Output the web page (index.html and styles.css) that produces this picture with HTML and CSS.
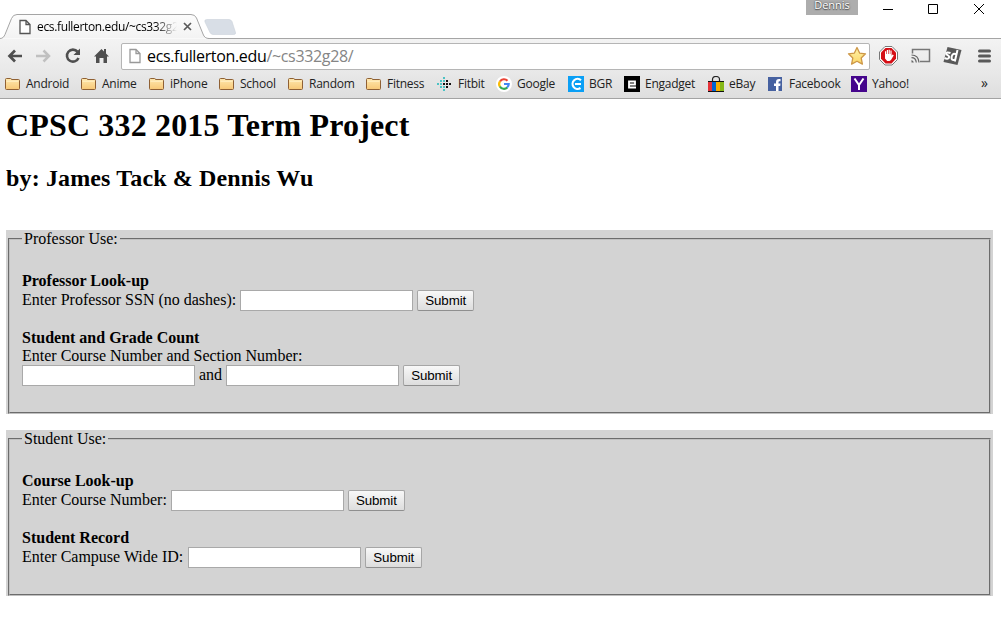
FILE: index.html
```html
<!DOCTYPE html>
<html lang="en">
<head>
<meta charset="utf-8">
<title>ecs.fullerton.edu/~cs332g28/</title>
<link rel="stylesheet" href="styles.css">
</head>
<body>
<svg width="0" height="0" class="defs" aria-hidden="true">
  <defs>
    <linearGradient id="fold" x1="0" y1="0" x2="0" y2="1"><stop offset="0" stop-color="#ffe8ae"/><stop offset="1" stop-color="#f7c877"/></linearGradient>
    <linearGradient id="strip" x1="0" y1="0" x2="0" y2="1"><stop offset="0" stop-color="#fcfcfc"/><stop offset="1" stop-color="#f3f3f3"/></linearGradient>
    <linearGradient id="gold" x1="0" y1="0" x2="0" y2="1"><stop offset="0" stop-color="#fff3a8"/><stop offset="1" stop-color="#fbd668"/></linearGradient>
    <symbol id="folder" viewBox="0 0 16 16"><path d="M.5 12.500V3.500q0-1 1-1h4q1 0 1 1h7q1 0 1 1v8q0 1-1 1h-12q-1 0-1-1z" fill="url(#fold)" stroke="#8f6034"/><path d="M1.500 5.200h12" stroke="#fff2ca" fill="none"/></symbol>
    <symbol id="page" viewBox="0 0 12 16"><path d="M1 1.500h6l4 4v9H1zM7 1.500v4h4" fill="#fff" stroke="currentColor" stroke-width="1.3"/></symbol>
  </defs>
</svg>

<header class="browser">
  <div class="titlebar">
    <div class="tab">
      <svg class="tab-shape" width="240" height="25" viewBox="0 0 240 25"><path d="M0 24.500c3 0 4-2 5-4L11.500 4.500Q13 .5 17 .5H191Q195 .5 196.500 4L203 20q1.500 4.500 6 4.500" fill="url(#strip)" stroke="#a5a5a5"/><path d="M207 5.500h22q2 0 3 2l3.500 11q.5 2-2 2H213q-2 0-3-2L205 8q-1-2.500 2-2.500z" fill="#d8dee6" stroke="#cbd1da" stroke-width=".6"/></svg>
      <svg class="tab-page" width="12" height="16"><use href="#page"/></svg>
      <span class="tab-title">ecs.fullerton.edu/~cs332g2</span>
      <svg class="tab-close" width="9" height="9" viewBox="0 0 9 9"><path d="M1 1l7 7M8 1L1 8" stroke="#5a5a5a" stroke-width="1.7"/></svg>
    </div>
    <span class="user">Dennis</span>
    <svg class="controls" width="102" height="12" viewBox="0 0 102 12" fill="none" stroke="#000"><path d="M0 6.500h10M45.500 1.500h9v9h-9zM91 1l10 10M101 1L91 11"/></svg>
  </div>

  <div class="toolbar">
    <svg class="nav" width="104" height="18" viewBox="0 0 104 18" fill="none">
      <path d="M15 9H2M8 3.500L2.500 9l5.500 5.500" stroke="#4f4f4f" stroke-width="2.700"/>
      <path d="M29 9h13M36.500 3.500L42 9l-5.500 5.500" stroke="#c0c0c0" stroke-width="2.500"/>
      <path d="M70.500 4.700A6 6 0 1 0 71.500 11" stroke="#4f4f4f" stroke-width="2.600"/><path d="M73 1.500V8h-6.500z" fill="#4f4f4f"/>
      <path d="M87 9.500L94.500 2l2.500 2.500V2h2v4.500l3 3H100V16h-3.500v-5h-4v5H89V9.500z" fill="#4f4f4f"/>
    </svg>
    <div class="omnibox">
      <svg class="url-page" width="12" height="16"><use href="#page"/></svg>
      <span class="url">ecs.fullerton.edu<span class="path">/~cs332g28/</span></span>
      <svg class="star" width="20" height="20" viewBox="0 0 20 20"><path d="M10 1.500l2.600 5.600 5.900.7-4.300 4.200 1.200 6.100L10 15.200l-5.400 2.900L5.800 12 1.500 7.800l5.900-.7z" fill="url(#gold)" stroke="#cd9747" stroke-width="1.300" stroke-linejoin="round"/></svg>
    </div>
    <svg class="extensions" width="114" height="22" viewBox="0 0 114 22">
      <path d="M6 1.500h7l5.500 5.500v7.500L13 20H6L.5 14.500V7z" fill="#fff" stroke="#777"/>
      <path d="M6.500 3h6L17 7.500v6.300L12.500 18.500h-6L2 13.800V7.500z" fill="#d50f16"/>
      <path d="M6 10V6.200h1.200V9h.6V5H9v4h.6V4.700h1.200V9h.6V5.500h1.200v5.200l1-1.200 1.200.8-2.800 4.700-1.500 1H8.200L6 13.500z" fill="#fff"/>
      <path d="M33.500 8.500V4.500h17v12H41" fill="none" stroke="#777" stroke-width="1.500"/>
      <path d="M32.500 10q7 0 7.500 7.500M32.500 12.700q4.300 0 4.800 4.800" fill="none" stroke="#666" stroke-width="1.200"/><path d="M32.500 15q2 .5 2.300 2.500h-2.300z" fill="#666"/>
      <path d="M68.500 2l14 3L78.500 20l-14-3z" fill="#595959"/>
      <path d="M71.500 8q-4-1.500-4.300.7c0 1.500 3.300 1.500 3 3.400-.3 2-3 1.800-4.700.9M78.500 5l-2.700 11.500M77.300 9.500q-3.500-2-4.600 2-.8 4.500 3.300 3.300" fill="none" stroke="#fff" stroke-width="2"/>
      <path d="M100.500 6h10M100.500 11h10M100.500 16h10" stroke="#595959" stroke-width="3" stroke-linecap="round"/>
    </svg>
  </div>

  <nav class="bookmarks">
    <span class="mark"><svg width="16" height="16"><use href="#folder"/></svg>Android</span>
    <span class="mark"><svg width="16" height="16"><use href="#folder"/></svg>Anime</span>
    <span class="mark"><svg width="16" height="16"><use href="#folder"/></svg>iPhone</span>
    <span class="mark"><svg width="16" height="16"><use href="#folder"/></svg>School</span>
    <span class="mark"><svg width="16" height="16"><use href="#folder"/></svg>Random</span>
    <span class="mark"><svg width="16" height="16"><use href="#folder"/></svg>Fitness</span>
    <span class="mark"><svg width="16" height="16" viewBox="0 0 16 16"><path d="M0 7h2v2H0zM3 7h2v2H3zM3 4h2v2H3zM3 10h2v2H3zM6 1h2v2H6zM6 4h2v2H6zM6 10h2v2H6zM6 13h2v2H6z" fill="#4cc2c4"/><path d="M6 7h2v2H6zM9 4h2v2H9zM9 7h2v2H9zM9 10h2v2H9zM12 7h2v2h-2z" fill="#111"/></svg>Fitbit</span>
    <span class="mark"><svg width="16" height="16" viewBox="0 0 16 16"><circle cx="8" cy="8" r="8" fill="#fff"/><g fill="none" stroke-width="2.200"><path d="M4 5.500A4.700 4.700 0 0 1 11.500 4.800" stroke="#ea4335"/><path d="M4 5.300A4.700 4.700 0 0 0 4 10.700" stroke="#fbbc05"/><path d="M3.900 10.500A4.700 4.700 0 0 0 11.300 11.400" stroke="#34a853"/><path d="M8 8h4.700a4.700 4.700 0 0 1-1.600 3.500" stroke="#4285f4"/></g></svg>Google</span>
    <span class="mark"><svg width="16" height="16" viewBox="0 0 16 16"><path fill="#0a9ff5" d="M0 0h16v16H0z"/><path d="M13 4.300A5 5 0 1 0 12.500 12M7 8h6" fill="none" stroke="#fff" stroke-width="2.200"/></svg>BGR</span>
    <span class="mark"><svg width="16" height="16" viewBox="0 0 16 16"><path d="M0 0h16v16H0z"/><path d="M12 11.500H5v-6h6v3H5" fill="none" stroke="#fff" stroke-width="1.800"/></svg>Engadget</span>
    <span class="mark"><svg width="16" height="16" viewBox="0 0 16 16"><path d="M4.500 5V3.500q0-3 3.500-3t3.500 3V5" fill="none" stroke="#222" stroke-width="1.200"/><path d="M0 5h16v11H0z" fill="#111"/><path d="M0 6h4v9H0z" fill="#e53238"/><path d="M4 6h4v9H4z" fill="#0064d2"/><path d="M8 6h4v9H8z" fill="#f5af02"/><path d="M12 6h4v9h-4z" fill="#86b817"/></svg>eBay</span>
    <span class="mark"><svg width="16" height="16" viewBox="0 0 16 16"><path d="M0 1h14v14H0z" fill="#4661a0"/><path d="M8 15v-5H6V7.500h2V6q0-3 3-3h1.500v2.300H11.500q-1 0-1 1v1.200h2L12.200 10h-1.700v5z" fill="#fff"/></svg>Facebook</span>
    <span class="mark"><svg width="16" height="16" viewBox="0 0 16 16"><path d="M0 0h16v16H0z" fill="#45058c"/><path d="M3.500 2.500L8 9l4.500-6.500M8 8.500V14" fill="none" stroke="#fff" stroke-width="2"/></svg>Yahoo!</span>
    <span class="more">»</span>
  </nav>
</header>

<main class="page">
  <h1>CPSC 332 2015 Term Project</h1>
  <h2>by: James Tack &amp; Dennis Wu</h2>

  <section class="panel">
    <fieldset>
      <legend>Professor Use:</legend>
      <form class="query">
        <b>Professor Look-up</b>
        <div class="row"><label>Enter Professor SSN (no dashes):</label><input type="text"><button type="button">Submit</button></div>
      </form>
      <form class="query">
        <b>Student and Grade Count</b>
        <span>Enter Course Number and Section Number:</span>
        <div class="row"><input type="text"><label>and</label><input type="text"><button type="button">Submit</button></div>
      </form>
    </fieldset>
  </section>

  <section class="panel">
    <fieldset>
      <legend>Student Use:</legend>
      <form class="query">
        <b>Course Look-up</b>
        <div class="row"><label>Enter Course Number:</label><input type="text"><button type="button">Submit</button></div>
      </form>
      <form class="query">
        <b>Student Record</b>
        <div class="row"><label class="campus-id">Enter Campuse Wide ID:</label><input type="text"><button type="button">Submit</button></div>
      </form>
    </fieldset>
  </section>
</main>
</body>
</html>
```
FILE: styles.css
```css
* { box-sizing: border-box; }
body { margin: 0; background: #fff; color: #000; font: 16px/18px "Liberation Serif", "Times New Roman", serif; overflow: hidden; }
svg { display: block; flex: none; }
.defs { position: absolute; }

.browser { height: 99px; border-bottom: 1px solid #a3a3a3; font-family: "Open Sans", "Noto Sans", sans-serif; }
.titlebar { height: 39px; display: flex; align-items: flex-start; background: linear-gradient(#a5a5a5, #a5a5a5) 208px 38px / 100% 1px no-repeat; }
.tab { position: relative; width: 240px; height: 25px; margin-top: 14px; padding-left: 19px; display: flex; align-items: center; }
.tab-shape { position: absolute; left: 0; top: 0; }
.tab-page, .tab-title, .tab-close { position: relative; }
.tab-page { color: #555; }
.tab-title { width: 140px; margin-left: 6px; white-space: nowrap; font-size: 12px; letter-spacing: -.35px; -webkit-mask-image: linear-gradient(90deg, #000 118px, transparent 140px); mask-image: linear-gradient(90deg, #000 118px, transparent 140px); }
.tab-close { margin-left: 6px; }
.user { width: 52px; height: 15px; margin-left: 566px; background: #adadad; color: #fff; font-size: 11px; line-height: 10px; text-align: center; text-shadow: 0 0 2px #444, 0 1px 1px #555; }
.controls { margin: 3px 0 0 25px; }

.toolbar { height: 34px; display: flex; align-items: center; padding-left: 7px; background: linear-gradient(#f3f3f3, #e8e8e8); }
.nav { margin-right: -1px; overflow: visible; }
.omnibox { width: 749px; height: 27px; margin-left: 11px; padding: 0 2px 0 7px; display: flex; align-items: center; border: 1px solid #b5b5b5; border-radius: 2px; background: #fff; }
.url-page { color: #999; }
.url { flex: 1; margin-left: 6px; font-size: 16px; letter-spacing: -.34px; }
.path { color: #858585; }
.extensions { margin-left: 9px; }

.bookmarks { height: 25px; padding-left: 5px; display: grid; grid-template-columns: 76px 68px 70px 69px 78px 71px 59px 72px 56px 84px 60px 83px 130px 1fr; align-items: center; padding-bottom: 3px; background: linear-gradient(#e8e8e8, #dedede); font-size: 12px; letter-spacing: -.25px; color: #222; }
.mark { display: flex; align-items: center; gap: 5px; white-space: nowrap; }
.more { font-size: 14px; line-height: 14px; padding-bottom: 2px; }

.page { padding: 8px 8px 0 6px; }
h1 { margin: 0; font-size: 32px; line-height: 37px; letter-spacing: .16px; }
h2 { margin: 21px 0 38px; font-size: 24px; line-height: 27px; letter-spacing: .14px; }
.panel { margin-bottom: 16px; padding: 0 2px; background: #d3d3d3; }
fieldset { margin: 0; padding: 24px 12px 26px; border: 2px groove #c0c0c0; }
legend { padding: 0 2px; }
.query { margin: 0; display: flex; flex-direction: column; }
.query + .query { margin-top: 18px; }
.row { height: 21px; display: flex; align-items: center; gap: 4px; }
.row label { padding-bottom: 2px; }
.campus-id { padding-right: 1px; }
input { width: 173px; height: 21px; border: 1px solid #a9a9a9; background: #fff; padding: 1px; }
button { width: 57px; height: 21px; padding: 0; border: 1px solid #a6a6a6; border-bottom-color: #8f8f8f; border-radius: 2px; background: linear-gradient(#f8f8f8, #ddd); color: #000; font: 13.333px "Liberation Sans", Arial, sans-serif; letter-spacing: -.1px; }
```
